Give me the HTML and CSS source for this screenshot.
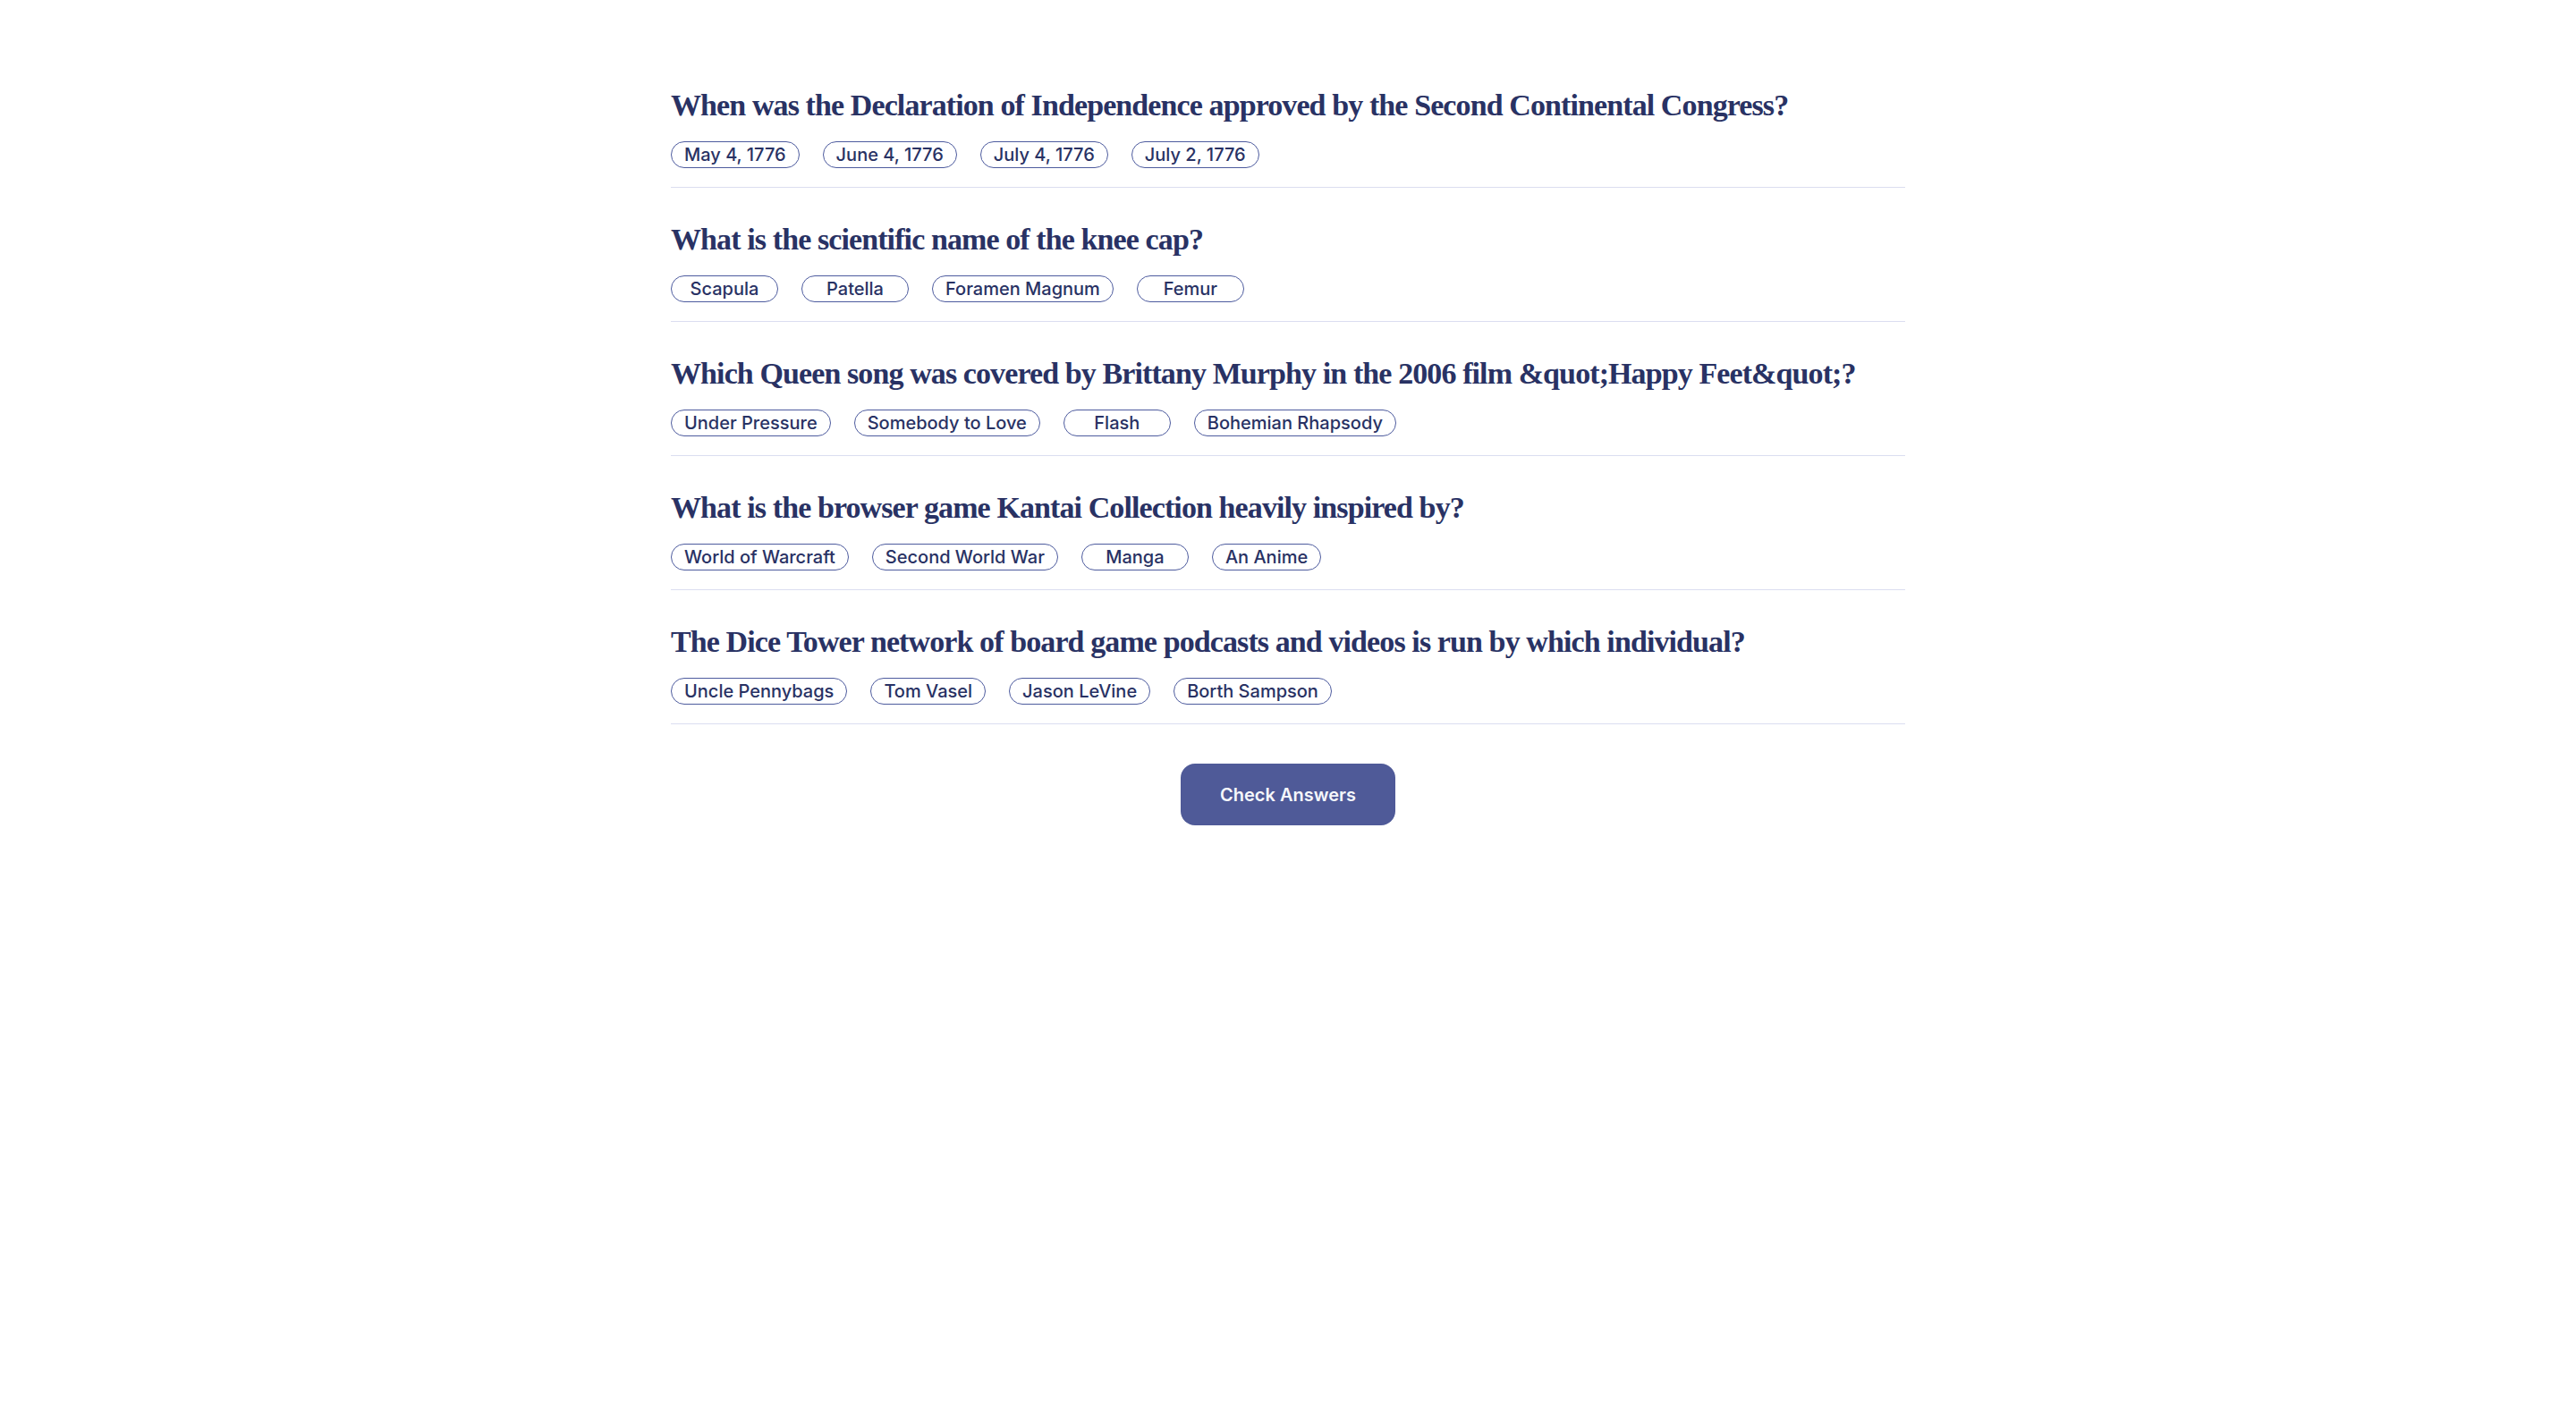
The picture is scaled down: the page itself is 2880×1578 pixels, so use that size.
FILE: index.html
```html
<!DOCTYPE html>
<html lang="en">
<head>
<meta charset="utf-8">
<title>Quiz</title>
<link rel="stylesheet" href="styles.css">
</head>
<body>
<main class="quiz">
  <section class="question">
    <h2 class="question-title">When was the Declaration of Independence approved by the Second Continental Congress?</h2>
    <div class="answers">
      <button class="answer">May 4, 1776</button>
      <button class="answer">June 4, 1776</button>
      <button class="answer">July 4, 1776</button>
      <button class="answer">July 2, 1776</button>
    </div>
  </section>
  <section class="question">
    <h2 class="question-title">What is the scientific name of the knee cap?</h2>
    <div class="answers">
      <button class="answer">Scapula</button>
      <button class="answer">Patella</button>
      <button class="answer">Foramen Magnum</button>
      <button class="answer">Femur</button>
    </div>
  </section>
  <section class="question">
    <h2 class="question-title">Which Queen song was covered by Brittany Murphy in the 2006 film &amp;quot;Happy Feet&amp;quot;?</h2>
    <div class="answers">
      <button class="answer">Under Pressure</button>
      <button class="answer">Somebody to Love</button>
      <button class="answer">Flash</button>
      <button class="answer">Bohemian Rhapsody</button>
    </div>
  </section>
  <section class="question">
    <h2 class="question-title">What is the browser game Kantai Collection heavily inspired by?</h2>
    <div class="answers">
      <button class="answer">World of Warcraft</button>
      <button class="answer">Second World War</button>
      <button class="answer">Manga</button>
      <button class="answer">An Anime</button>
    </div>
  </section>
  <section class="question">
    <h2 class="question-title">The Dice Tower network of board game podcasts and videos is run by which individual?</h2>
    <div class="answers">
      <button class="answer">Uncle Pennybags</button>
      <button class="answer">Tom Vasel</button>
      <button class="answer">Jason LeVine</button>
      <button class="answer">Borth Sampson</button>
    </div>
  </section>
  <div class="actions">
    <button class="check-btn">Check Answers</button>
  </div>
</main>
</body>
</html>
```

FILE: styles.css
```css
* { box-sizing: border-box; }

html, body {
  margin: 0;
  padding: 0;
  background: #ffffff;
}

body {
  font-family: Inter, "Noto Sans", sans-serif;
  color: #293264;
}

.quiz {
  width: 1380px;
  margin: 0 auto;
  padding-top: 60px;
}

.question {
  padding: 38px 0 21px;
  border-bottom: 1px solid #dbdef0;
}

.question-title {
  margin: 0;
  font-family: "Liberation Serif", "Times New Roman", serif;
  font-weight: 700;
  font-size: 34px;
  line-height: 40px;
  letter-spacing: -0.9px;
  color: #293264;
}

.answers {
  display: flex;
  gap: 26px;
  margin-top: 20px;
}

.answer {
  min-width: 120px;
  height: 30px;
  padding: 0 14px;
  border: 1px solid #4d5b9e;
  border-radius: 15px;
  background: #ffffff;
  font-family: Inter, "Noto Sans", sans-serif;
  font-size: 20px;
  font-weight: 500;
  line-height: 28px;
  color: #293264;
  text-align: center;
}

.actions {
  display: flex;
  justify-content: center;
  margin-top: 44px;
}

.check-btn {
  width: 240px;
  height: 69px;
  border: none;
  border-radius: 16px;
  background: #4f5a98;
  color: #f5f7fb;
  font-family: Inter, "Noto Sans", sans-serif;
  font-size: 20px;
  font-weight: 600;
}
```
